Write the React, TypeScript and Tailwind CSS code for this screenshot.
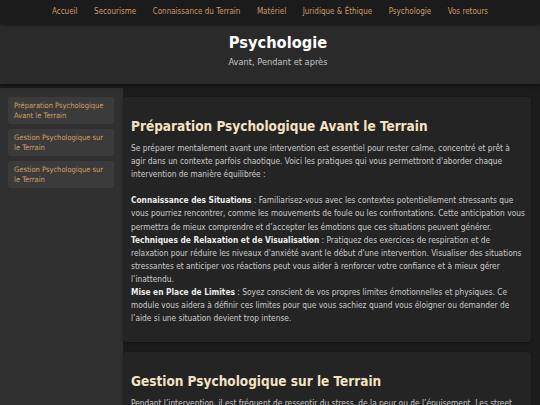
import React from 'react';

const font = "font-['DejaVu_Sans_Condensed','DejaVu_Sans',sans-serif] font-stretch-condensed";

const navLinks = [
  'Accueil',
  'Secourisme',
  'Connaissance du Terrain',
  'Matériel',
  'Juridique & Éthique',
  'Psychologie',
  'Vos retours',
];

const sideLinks = [
  'Préparation Psychologique Avant le Terrain',
  'Gestion Psychologique sur le Terrain',
  'Gestion Psychologique sur le Terrain',
];

function B({ children }: { children: React.ReactNode }) {
  return <strong className="text-[#ececec]">{children}</strong>;
}

export default function App() {
  return (
    <div className={`${font} min-h-screen w-full bg-[#1c1c1c] text-[#cccccc] flex flex-col`}>
      {/* Navigation */}
      <nav className="h-[24px] bg-[#1b1b1b] flex items-center justify-center gap-[16.5px] shadow-[0_1px_4px_rgba(0,0,0,0.5)] relative z-20">
        {navLinks.map((l) => (
          <a key={l} href="#" className="text-[8px] text-[#c99c66] leading-none">
            {l}
          </a>
        ))}
      </nav>

      {/* Header */}
      <header className="h-[60px] bg-[#2a2a2a] flex flex-col items-center pt-[9px] pl-[16px] shadow-[0_2px_4px_rgba(0,0,0,0.45)] relative z-10">
        <h1 className="text-[16.3px] font-bold text-white leading-[20px]">Psychologie</h1>
        <p className="text-[9.2px] text-[#c4c4c4] leading-[12px] mt-[3px]">Avant, Pendant et après</p>
      </header>

      {/* Main */}
      <div className="flex flex-1 mt-[4px]">
        <aside className="w-[123px] shrink-0 bg-[#303030] pt-[9px] pl-[8px] pr-[9px] flex flex-col gap-[5px]">
          {sideLinks.map((l, i) => (
            <a
              key={i}
              href="#"
              className="block bg-[#3b3b3b] rounded-[3px] px-[6px] py-[4px] text-[7.5px] leading-[9.5px] text-[#d39f63]"
            >
              {l}
            </a>
          ))}
        </aside>

        <main className="flex-1 min-w-0 pt-[9px] pr-[9px] flex flex-col gap-[10px]">
          <section className="bg-[#242424] rounded-[4px] pl-[8px] pt-[21px] pb-[17px] shadow-[0_1px_3px_rgba(0,0,0,0.4)]">
            <h2 className="text-[13.5px] font-bold text-[#f3e3c3] leading-[17px] mb-[7px]">
              Préparation Psychologique Avant le Terrain
            </h2>
            <p className="text-[8.3px] leading-[13.1px] whitespace-nowrap">
              Se préparer mentalement avant une intervention est essentiel pour rester calme, concentré et prêt à
              <br />
              agir dans un contexte parfois chaotique. Voici les pratiques qui vous permettront d'aborder chaque
              <br />
              intervention de manière équilibrée :
              <br />
              <br />
              <B>Connaissance des Situations</B> : Familiarisez-vous avec les contextes potentiellement stressants que
              <br />
              vous pourriez rencontrer, comme les mouvements de foule ou les confrontations. Cette anticipation vous
              <br />
              permettra de mieux comprendre et d’accepter les émotions que ces situations peuvent générer.
              <br />
              <B>Techniques de Relaxation et de Visualisation</B> : Pratiquez des exercices de respiration et de
              <br />
              relaxation pour réduire les niveaux d'anxiété avant le début d'une intervention. Visualiser des situations
              <br />
              stressantes et anticiper vos réactions peut vous aider à renforcer votre confiance et à mieux gérer
              <br />
              l’inattendu.
              <br />
              <B>Mise en Place de Limites</B> : Soyez conscient de vos propres limites émotionnelles et physiques. Ce
              <br />
              module vous aidera à définir ces limites pour que vous sachiez quand vous éloigner ou demander de
              <br />
              l’aide si une situation devient trop intense.
            </p>
          </section>

          <section className="bg-[#242424] rounded-[4px] pl-[8px] pt-[21px] pb-[17px] shadow-[0_1px_3px_rgba(0,0,0,0.4)]">
            <h2 className="text-[13.5px] font-bold text-[#f3e3c3] leading-[17px] mb-[7px]">
              Gestion Psychologique sur le Terrain
            </h2>
            <p className="text-[8.3px] leading-[13.1px] whitespace-nowrap">
              Pendant l’intervention, il est fréquent de ressentir du stress, de la peur ou de l’épuisement. Les street
              <br />
              medics doivent apprendre à gérer ces émotions pour rester efficaces et garder leur sang-froid face
              <br />
              aux situations difficiles.
            </p>
          </section>
        </main>
      </div>
    </div>
  );
}
